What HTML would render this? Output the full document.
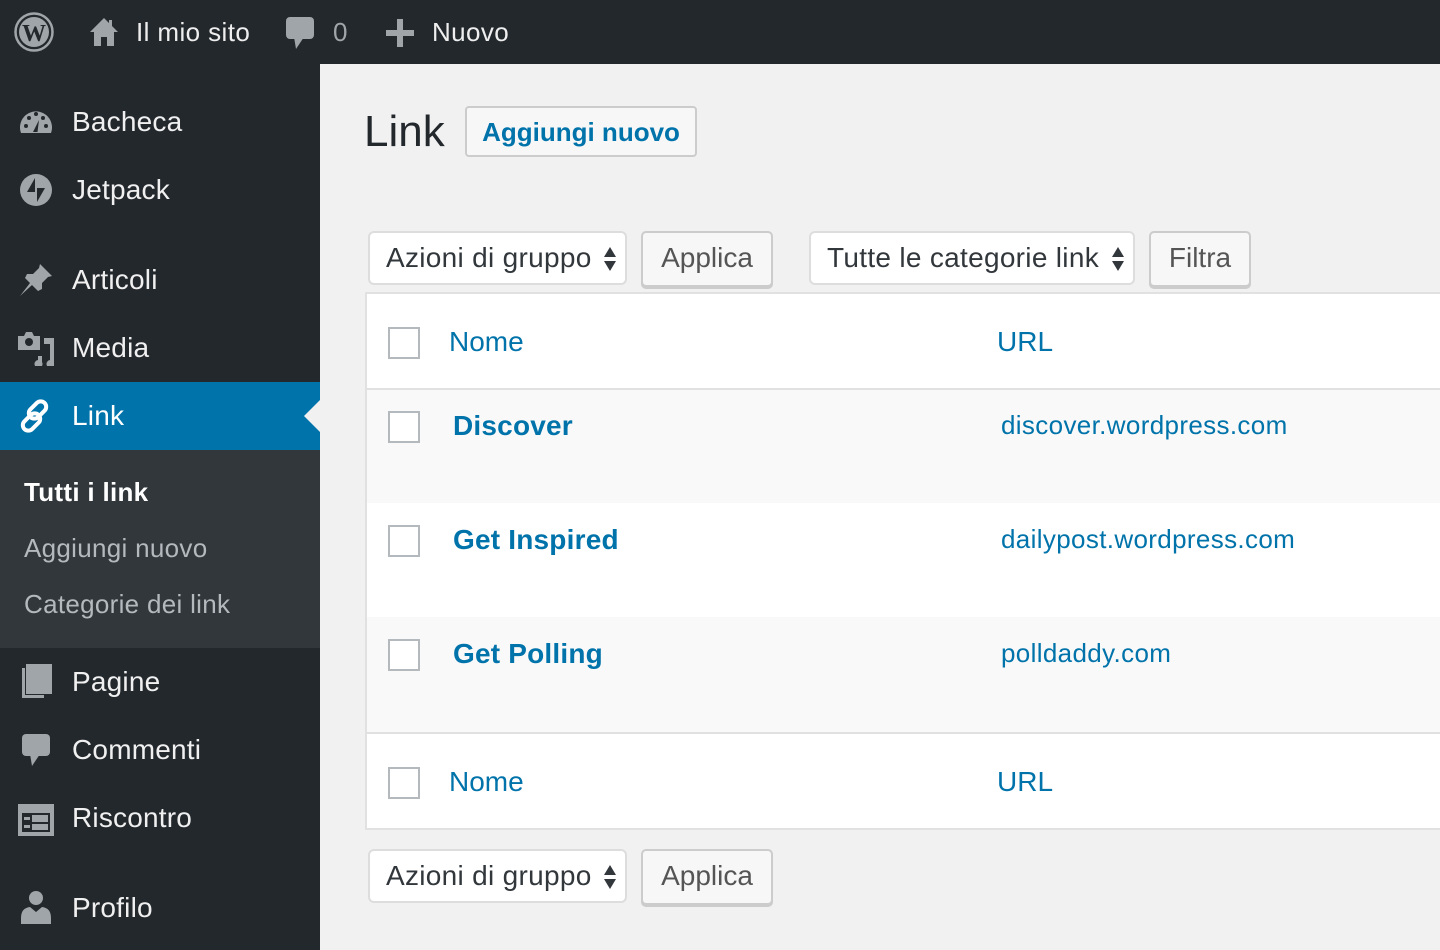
<!DOCTYPE html>
<html><head><meta charset="utf-8"><style>
*{margin:0;padding:0;box-sizing:border-box}
body{width:1440px;height:950px;overflow:hidden;background:#f1f1f1;font-family:"Liberation Sans",Arial,sans-serif;position:relative}
.a{position:absolute}
#bar{left:0;top:0;width:1440px;height:64px;background:#23282d}
#side{left:0;top:64px;width:320px;height:886px;background:#23282d}
.bt{color:#eee;font-size:26px;line-height:64px;top:0;letter-spacing:0.4px}
.mi{color:#f0f0f0;font-size:28px;left:72px;line-height:40px;letter-spacing:0.2px}
.ic{left:18px;width:36px;height:36px}
#sub{left:0;top:450px;width:320px;height:198px;background:#32373c}
.si{left:24px;font-size:26px;color:#b4b9be;line-height:36px;letter-spacing:0.3px}
.sel{background:#fff;border:2px solid #ddd;border-radius:6px;height:54px;font-size:28px;color:#32373c;line-height:50px;padding-left:16px;letter-spacing:0.3px}
.btn{background:#f7f7f7;border:2px solid #ccc;border-radius:5px;box-shadow:0 2px 0 #ccc;height:56px;font-size:28px;color:#555;line-height:50px;text-align:center}
.arr{position:absolute;right:8px;top:14px;width:14px;height:24px}
.cb{width:32px;height:32px;border:2px solid #b4b9be;background:#fff;left:388px}
.hl{font-size:28px;color:#0073aa;line-height:40px}
.rl{font-size:28px;color:#0073aa;font-weight:bold;left:453px;line-height:40px;letter-spacing:0.2px}
.ul{font-size:26px;color:#0073aa;left:1001px;line-height:36px;letter-spacing:0.35px}
</style></head><body>
<div class="a" id="bar"></div>
<svg class="a" style="left:14px;top:12px" width="40" height="40" viewBox="0 0 40 40"><circle cx="20" cy="20" r="18.5" fill="none" stroke="#a0a5aa" stroke-width="2.5"/><circle cx="20" cy="20" r="15" fill="#a0a5aa"/><text x="20" y="29" text-anchor="middle" font-family="Liberation Serif" font-weight="bold" font-size="24" fill="#23282d">W</text></svg>
<svg class="a" style="left:88px;top:16px" width="32" height="32" viewBox="0 0 32 32"><path d="M16 2 L2 16 H6 V30 H13 V21 H19 V30 H26 V16 H30 L24 10 V4 H21 V7 Z" fill="#a0a5aa"/><rect x="13" y="21" width="6" height="9" fill="#23282d"/></svg>
<div class="a bt" style="left:136px">Il mio sito</div>
<svg class="a" style="left:286px;top:17px" width="30" height="34" viewBox="0 0 30 34"><rect x="0" y="0" width="28" height="22" rx="4" fill="#a0a5aa"/><path d="M8 20 L10 32 L18 20Z" fill="#a0a5aa"/></svg>
<div class="a bt" style="left:333px;color:#a0a5aa">0</div>
<svg class="a" style="left:386px;top:19px" width="28" height="28"><rect x="11" y="0" width="6" height="28" fill="#a0a5aa"/><rect x="0" y="11" width="28" height="6" fill="#a0a5aa"/></svg>
<div class="a bt" style="left:432px">Nuovo</div>

<div class="a" id="side"></div>
<svg class="a ic" style="top:106px" viewBox="0 0 36 36"><path d="M3 27 A16 16 0 1 1 33 27 Z" fill="#a0a5aa"/><g fill="#23282d"><circle cx="8" cy="20" r="2"/><circle cx="11" cy="12" r="2"/><circle cx="18" cy="8" r="2"/><circle cx="28" cy="20" r="2"/><circle cx="25" cy="12" r="2"/><path d="M15 26 L21 14 L19.5 26Z"/></g></svg>
<div class="a mi" style="top:102px">Bacheca</div>
<svg class="a ic" style="top:172px" viewBox="0 0 36 36"><circle cx="18" cy="18" r="16" fill="#a0a5aa"/><path d="M17 6 V20 H9Z M19 30 V16 H27Z" fill="#23282d"/></svg>
<div class="a mi" style="top:170px">Jetpack</div>
<svg class="a ic" style="top:262px" viewBox="0 0 36 36"><path d="M22 2 L34 14 L30 15 L24 21 L24 27 L20 29 L14 23 L2 34 L12 21 L7 16 L9 12 L15 12 L21 6Z" fill="#a0a5aa"/></svg>
<div class="a mi" style="top:260px">Articoli</div>
<svg class="a ic" style="top:330px" viewBox="0 0 36 36"><path d="M0 6 H6 L8 2 H14 L16 6 H22 V20 H0Z" fill="#a0a5aa"/><circle cx="11" cy="12" r="4" fill="#23282d"/><path d="M26 8 H36 V32 A4 4 0 1 1 32 30 V14 H26Z M18 26 H24 V32 A4 4 0 1 1 20 30 V26 Z" fill="#a0a5aa"/></svg>
<div class="a mi" style="top:328px">Media</div>
<div class="a" style="left:0;top:382px;width:320px;height:68px;background:#0073aa"></div>
<div class="a" style="left:304px;top:400px;width:0;height:0;border-top:16px solid transparent;border-bottom:16px solid transparent;border-right:16px solid #f1f1f1"></div>
<svg class="a ic" style="top:398px" viewBox="0 0 36 36"><g fill="none" stroke="#fff" stroke-width="4"><rect x="14" y="2" width="11" height="20" rx="5.5" transform="rotate(45 19.5 12)"/><rect x="8" y="14" width="11" height="20" rx="5.5" transform="rotate(45 13.5 24)"/></g></svg>
<div class="a mi" style="top:396px;color:#fff">Link</div>
<div class="a" id="sub"></div>
<div class="a si" style="top:474px;color:#fff;font-weight:bold">Tutti i link</div>
<div class="a si" style="top:530px">Aggiungi nuovo</div>
<div class="a si" style="top:586px">Categorie dei link</div>
<svg class="a ic" style="top:664px" viewBox="0 0 36 36"><rect x="8" y="0" width="26" height="30" fill="#a0a5aa"/><path d="M4 4 H7 V31 H26 V34 H4Z" fill="#a0a5aa"/></svg>
<div class="a mi" style="top:662px">Pagine</div>
<svg class="a ic" style="top:734px" viewBox="0 0 36 36"><rect x="4" y="0" width="28" height="22" rx="4" fill="#a0a5aa"/><path d="M12 20 L14 32 L22 20Z" fill="#a0a5aa"/></svg>
<div class="a mi" style="top:730px">Commenti</div>
<svg class="a ic" style="top:802px" viewBox="0 0 36 36"><rect x="0" y="2" width="36" height="32" fill="#a0a5aa"/><rect x="4" y="11" width="28" height="19" fill="#23282d"/><g fill="#a0a5aa"><rect x="6" y="15" width="6" height="3"/><rect x="6" y="23" width="6" height="3"/><rect x="14" y="13" width="16" height="7"/><rect x="14" y="22" width="16" height="6"/></g></svg>
<div class="a mi" style="top:798px">Riscontro</div>
<svg class="a ic" style="top:890px" viewBox="0 0 36 36"><circle cx="18" cy="8" r="7" fill="#a0a5aa"/><path d="M3 34 V28 Q3 18 12 17 L18 22 L24 17 Q33 18 33 28 V34Z" fill="#a0a5aa"/></svg>
<div class="a mi" style="top:888px">Profilo</div>

<div class="a" style="left:364px;top:106px;font-size:44px;color:#23282d;line-height:52px">Link</div>
<div class="a" style="left:465px;top:106px;width:232px;height:51px;border:2px solid #ccc;border-radius:4px;background:#f7f7f7;color:#0073aa;font-size:26px;font-weight:bold;line-height:49px;text-align:center">Aggiungi nuovo</div>

<svg width="0" height="0" style="position:absolute"><defs><symbol id="ar" viewBox="0 0 14 24"><path d="M7 0 L13 10 H1Z M7 24 L13 14 H1Z" fill="#32373c"/></symbol></defs></svg>
<div class="a sel" style="left:368px;top:231px;width:259px">Azioni di gruppo<svg class="arr"><use href="#ar"/></svg></div>
<div class="a btn" style="left:641px;top:231px;width:132px">Applica</div>
<div class="a sel" style="left:809px;top:231px;width:326px">Tutte le categorie link<svg class="arr"><use href="#ar"/></svg></div>
<div class="a btn" style="left:1149px;top:231px;width:102px">Filtra</div>

<div class="a" style="left:365px;top:292px;width:1080px;height:538px;border:2px solid #e1e1e1;background:#fff"></div>
<div class="a" style="left:367px;top:388px;width:1073px;height:2px;background:#e1e1e1"></div>
<div class="a" style="left:367px;top:390px;width:1073px;height:113px;background:#f9f9f9"></div>
<div class="a" style="left:367px;top:617px;width:1073px;height:115px;background:#f9f9f9"></div>
<div class="a" style="left:367px;top:732px;width:1073px;height:2px;background:#e1e1e1"></div>

<div class="a cb" style="top:327px"></div>
<div class="a hl" style="left:449px;top:322px">Nome</div>
<div class="a hl" style="left:997px;top:322px">URL</div>
<div class="a cb" style="top:411px"></div>
<div class="a rl" style="top:406px">Discover</div>
<div class="a ul" style="top:407px">discover.wordpress.com</div>
<div class="a cb" style="top:525px"></div>
<div class="a rl" style="top:520px">Get Inspired</div>
<div class="a ul" style="top:521px">dailypost.wordpress.com</div>
<div class="a cb" style="top:639px"></div>
<div class="a rl" style="top:634px">Get Polling</div>
<div class="a ul" style="top:635px">polldaddy.com</div>
<div class="a cb" style="top:767px"></div>
<div class="a hl" style="left:449px;top:762px">Nome</div>
<div class="a hl" style="left:997px;top:762px">URL</div>

<div class="a sel" style="left:368px;top:849px;width:259px">Azioni di gruppo<svg class="arr"><use href="#ar"/></svg></div>
<div class="a btn" style="left:641px;top:849px;width:132px">Applica</div>
</body></html>
